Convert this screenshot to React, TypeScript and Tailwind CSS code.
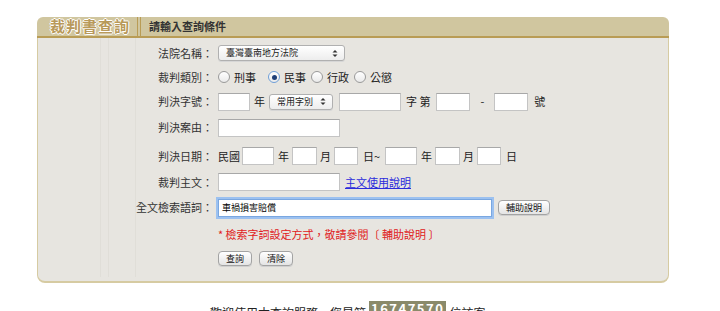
import React from 'react'

const font = { fontFamily: '"Noto Sans CJK TC", "Noto Sans CJK SC", sans-serif' }

function TextBox({ w, value, focus }: { w: string; value?: string; focus?: boolean }) {
  return (
    <div
      className={`${w} h-[18px] bg-white flex items-center px-[3px] text-[9px] text-black ${
        focus
          ? 'border border-[#7aa7e0] shadow-[0_0_0_2px_#9cc1f0]'
          : 'border border-[#c4c4c4] border-t-[#a8a8a8]'
      }`}
    >
      {value}
    </div>
  )
}

function Arrows() {
  return (
    <svg width="6" height="9" viewBox="0 0 6 9" className="shrink-0">
      <path d="M0.5 3.5 L3 1 L5.5 3.5 Z" fill="#333" />
      <path d="M0.5 5.5 L3 8 L5.5 5.5 Z" fill="#333" />
    </svg>
  )
}

function Select({ w, label }: { w: string; label: string }) {
  return (
    <div
      className={`${w} h-[16px] rounded-[3px] border border-[#b0b0b0] bg-gradient-to-b from-white to-[#ededed] flex items-center justify-between pl-[7px] pr-[6px] text-[9px] text-[#222] shadow-[0_1px_0_#d6d6d6]`}
    >
      <span>{label}</span>
      <Arrows />
    </div>
  )
}

function Radio({ checked, label }: { checked?: boolean; label: string }) {
  return (
    <div className="flex items-center">
      <span
        className={`w-[12px] h-[12px] rounded-full border flex items-center justify-center bg-gradient-to-b from-white to-[#eaeaea] ${
          checked ? 'border-[#6f9fd8]' : 'border-[#9a9a9a]'
        }`}
      >
        {checked && <span className="w-[5px] h-[5px] rounded-full bg-[#1e3f78]" />}
      </span>
      <span className="ml-[4px] text-[11px] text-[#222]">{label}</span>
    </div>
  )
}

function Button({ label }: { label: string }) {
  return (
    <div className="h-[15px] px-[7px] rounded-[4px] border border-[#a3a3a3] bg-gradient-to-b from-white to-[#e4e4e4] flex items-center text-[9px] text-[#111] shadow-[0_1px_0_#cfcfcf]">
      {label}
    </div>
  )
}

function Row({ h, label, children }: { h: string; label?: string; children: React.ReactNode }) {
  return (
    <div className={`flex items-center ${h}`}>
      <div className="w-[175px] shrink-0 text-right text-[11px] text-[#333]">{label}</div>
      <div className="ml-[5px] flex items-center text-[11px] text-[#222]">{children}</div>
    </div>
  )
}

export default function App() {
  return (
    <div className="w-[720px] h-[311px] bg-white overflow-hidden relative" style={font}>
      <div className="ml-[37px] mt-[17px] w-[632px]">
        {/* header bar */}
        <div className="h-[21px] bg-[#d0c69f] rounded-tl-[6px] rounded-tr-[6px] border-b-2 border-[#b99c55] flex items-center relative">
          <div
            className="w-[100px] pl-[13px] text-[15px] font-bold text-[#b8995a] tracking-[1px]"
            style={{ textShadow: '1px 0 0 #fff, -1px 0 0 #fff, 0 1px 0 #fff, 0 -1px 0 #fff' }}
          >
            裁判書查詢
          </div>
          <div className="h-full flex gap-[2px]">
            <div className="w-[1px] h-full bg-[#b99c55]" />
            <div className="w-[1px] h-full bg-[#b99c55]" />
          </div>
          <div className="ml-[8px] text-[11px] text-[#333] font-bold">請輸入查詢條件</div>
          <svg width="7" height="4" viewBox="0 0 7 4" className="absolute right-[8px] -bottom-[5px]">
            <path d="M0 0 L7 0 L3.5 4 Z" fill="#b99c55" />
          </svg>
        </div>

        {/* form body */}
        <div className="relative bg-[#e7e5e0] border-x border-b-2 border-[#d6cba2] rounded-bl-[8px] rounded-br-[8px] pt-[3px] pb-[10px]">
          <div className="absolute left-[62px] top-0 bottom-[4px] w-[1px] bg-[#e0ded8]" />
          <div className="absolute left-[70px] top-0 bottom-[4px] w-[1px] bg-[#e0ded8]" />
          <div className="absolute left-[97px] top-0 bottom-[4px] w-[1px] bg-[#e0ded8]" />

          <div className="relative">
            <Row h="h-[24px]" label="法院名稱：">
              <Select w="w-[127px]" label="臺灣臺南地方法院" />
            </Row>
            <Row h="h-[24px]" label="裁判類別：">
              <div className="flex items-center gap-[5px]">
                <Radio label="刑事" />
                <div className="w-[2px]" />
                <Radio checked label="民事" />
                <Radio label="行政" />
                <Radio label="公懲" />
              </div>
            </Row>
            <Row h="h-[25px]" label="判決字號：">
              <TextBox w="w-[32px]" />
              <span className="mx-[4px]">年</span>
              <Select w="w-[64px]" label="常用字別" />
              <div className="w-[6px]" />
              <TextBox w="w-[62px]" />
              <span className="ml-[5px] mr-[6px]">字 第</span>
              <TextBox w="w-[34px]" />
              <span className="mx-[10px]">-</span>
              <TextBox w="w-[34px]" />
              <span className="ml-[6px]">號</span>
            </Row>
            <Row h="h-[27px]" label="判決案由：">
              <TextBox w="w-[122px]" />
            </Row>
            <Row h="h-[30px]" label="判決日期：">
              <span className="mr-[2px]">民國</span>
              <TextBox w="w-[32px]" />
              <span className="ml-[4px] mr-[3px]">年</span>
              <TextBox w="w-[25px]" />
              <span className="mx-[3px]">月</span>
              <TextBox w="w-[24px]" />
              <span className="ml-[5px] mr-[5px]">日~</span>
              <TextBox w="w-[32px]" />
              <span className="ml-[4px] mr-[3px]">年</span>
              <TextBox w="w-[25px]" />
              <span className="mx-[3px]">月</span>
              <TextBox w="w-[24px]" />
              <span className="ml-[5px]">日</span>
            </Row>
            <Row h="h-[22px]" label="裁判主文：">
              <TextBox w="w-[122px]" />
              <a className="ml-[5px] text-[11px] text-[#2b2bdc] underline cursor-pointer">主文使用說明</a>
            </Row>
            <Row h="h-[29px]" label="全文檢索語詞：">
              <TextBox w="w-[274px]" value="車禍損害賠償" focus />
              <div className="w-[6px]" />
              <Button label="輔助說明" />
            </Row>
            <Row h="h-[24px]">
              <span className="text-[11px] text-[#e02020]">* 檢索字詞設定方式，敬請參閱〔 輔助說明 〕</span>
            </Row>
            <Row h="h-[25px]">
              <Button label="查詢" />
              <div className="w-[7px]" />
              <Button label="清除" />
            </Row>
          </div>
        </div>
      </div>

      {/* footer counter, cut off by the window like in the screenshot */}
      <div className="mt-[18px] ml-[210px] flex items-start text-[12px] text-[#222]">
        <span className="mt-[3px]">歡迎使用本查詢服務，您是第</span>
        <span className="mx-[3px] px-[2px] bg-[#8a8a6a] text-white font-bold tracking-[1.5px] text-[13px] leading-[16px]">
          16747570
        </span>
        <span className="mt-[3px]">位訪客</span>
      </div>
    </div>
  )
}
